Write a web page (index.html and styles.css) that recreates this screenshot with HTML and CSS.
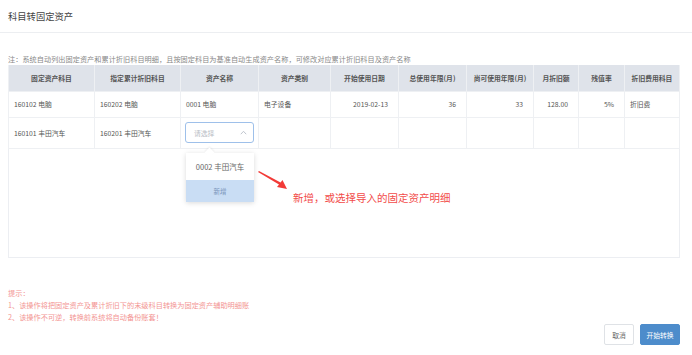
FILE: index.html
```html
<!DOCTYPE html>
<html lang="zh-CN">
<head>
<meta charset="utf-8">
<link rel="stylesheet" href="styles.css">
</head>
<body>
<div class="dialog">
  <div class="dlg-header">科目转固定资产</div>
  <div class="dlg-body">
    <div class="note">注：系统自动列出固定资产和累计折旧科目明细，且按固定科目为基准自动生成资产名称，可修改对应累计折旧科目及资产名称</div>
    <div class="grid-wrap">
      <table class="grid">
        <colgroup>
          <col style="width:86px"><col style="width:86px"><col style="width:78px"><col style="width:72px"><col style="width:68px"><col style="width:68px"><col style="width:67px"><col style="width:45px"><col style="width:46px"><col>
        </colgroup>
        <thead>
          <tr>
            <th>固定资产科目</th><th>指定累计折旧科目</th><th>资产名称</th><th>资产类别</th><th>开始使用日期</th><th>总使用年限(月)</th><th>尚可使用年限(月)</th><th>月折旧额</th><th>残值率</th><th>折旧费用科目</th>
          </tr>
        </thead>
        <tbody>
          <tr class="r1">
            <td>160102 电脑</td><td>160202 电脑</td><td>0001 电脑</td><td>电子设备</td><td class="num">2019-02-13</td><td class="num">36</td><td class="num">33</td><td class="num">128.00</td><td class="num">5%</td><td>折旧费</td>
          </tr>
          <tr class="r2">
            <td>160101 丰田汽车</td><td>160201 丰田汽车</td>
            <td class="sel-cell">
              <div class="select"><span class="ph">请选择</span><svg class="chev" width="7" height="5" viewBox="0 0 7 5"><path d="M0.8 4.2 L3.5 1.3 L6.2 4.2" fill="none" stroke="#b8bec8" stroke-width="0.9"/></svg></div>
              <div class="popup">
                <span class="popup-caret"></span>
                <div class="opt">0002 丰田汽车</div>
                <div class="opt add">新增</div>
              </div>
            </td>
            <td></td><td></td><td></td><td></td><td></td><td></td><td></td>
          </tr>
        </tbody>
      </table>
      <svg class="arrow" width="40" height="24" viewBox="0 0 40 24"><path d="M1 1 L22 13.5 L20 16 L30 18 L25.5 9 L23.6 11.5 L2 0 Z" fill="#f23a37"/></svg>
      <div class="annot">新增，或选择导入的固定资产明细</div>
    </div>
    <div class="tips">
      <div>提示：</div>
      <div>1、该操作将把固定资产及累计折旧下的末级科目转换为固定资产辅助明细账</div>
      <div>2、该操作不可逆，转换前系统将自动备份账套！</div>
    </div>
    <div class="actions">
      <button class="btn">取消</button>
      <button class="btn primary">开始转换</button>
    </div>
  </div>
</div>
</body>
</html>
```
FILE: styles.css
```css
* { box-sizing: border-box; }
html, body { margin: 0; padding: 0; background: #fff; }
body {
  font-family: "Noto Sans CJK SC", "Noto Sans", sans-serif;
  color: #555;
  width: 692px;
  height: 355px;
  overflow: hidden;
}
.dlg-header {
  height: 33px;
  line-height: 33px;
  padding-left: 8px;
  font-size: 9.3px;
  color: #444;
  border-bottom: 1px solid #eceef1;
}
.dlg-body {
  padding: 0 12px 0 8px;
}
.note {
  margin-top: 20px;
  font-size: 7.15px;
  letter-spacing: 0.05px;
  line-height: 12px;
  color: #888;
  white-space: nowrap;
}
.grid-wrap {
  position: relative;
  height: 193px;
  border: 1px solid #eceef2;
  border-top: none;
}
.grid {
  border-collapse: collapse;
  table-layout: fixed;
  width: 672px;
  margin-left: -1px;
  font-size: 6.8px;
}
.grid th {
  background: #dfe3ea;
  color: #555;
  font-weight: 600;
  height: 26px;
  text-align: center;
  border: 1px solid #eef0f3;
  border-top: none;
  padding: 0;
}
.grid td {
  border: 1px solid #eef0f3;
  padding: 0 5px;
  color: #555;
  white-space: nowrap;
}
.grid tr.r1 td { height: 26px; }
.grid tr.r2 td { height: 31px; }
.grid td.num { text-align: right; padding-right: 10px; }
.grid td.sel-cell { position: relative; padding: 0 4px; }
.select {
  height: 21px;
  border: 1px solid #9ec0ea;
  border-radius: 3px;
  display: flex;
  align-items: center;
  justify-content: space-between;
  padding: 0 6px 0 8px;
}
.ph { color: #b8bcc4; font-size: 6.8px; }
.popup {
  position: absolute;
  left: 5px;
  top: 35px;
  width: 68px;
  background: #fff;
  box-shadow: 0 1px 5px rgba(0,0,0,0.15);
  z-index: 2;
}
.popup-caret {
  position: absolute;
  top: -4px;
  left: 20px;
  width: 7px;
  height: 7px;
  background: #fff;
  transform: rotate(45deg);
  box-shadow: -1px -1px 2px rgba(0,0,0,0.06);
}
.opt {
  position: relative;
  height: 27px;
  line-height: 27px;
  text-align: center;
  font-size: 7.5px;
  color: #666;
}
.opt.add {
  height: 22px;
  line-height: 22px;
  background: #c9ddf4;
  color: #7a95bb;
  font-size: 6.5px;
}
.arrow {
  position: absolute;
  left: 248px;
  top: 106px;
}
.annot {
  position: absolute;
  left: 284px;
  top: 125px;
  font-size: 10.5px;
  color: #f24b49;
  white-space: nowrap;
}
.tips {
  margin-top: 29px;
  font-size: 7.2px;
  line-height: 12px;
  color: #f39593;
}
.actions {
  display: flex;
  justify-content: flex-end;
  gap: 6px;
  margin-top: 1px;
}
.btn {
  font-family: inherit;
  height: 21px;
  padding: 0;
  width: 30px;
  font-size: 6.8px;
  background: #fff;
  border: 1px solid #dfe2e6;
  border-radius: 2px;
  color: #666;
}
.btn.primary {
  width: 40px;
  background: #4d8ccb;
  border-color: #4d8ccb;
  color: #fff;
}
```
